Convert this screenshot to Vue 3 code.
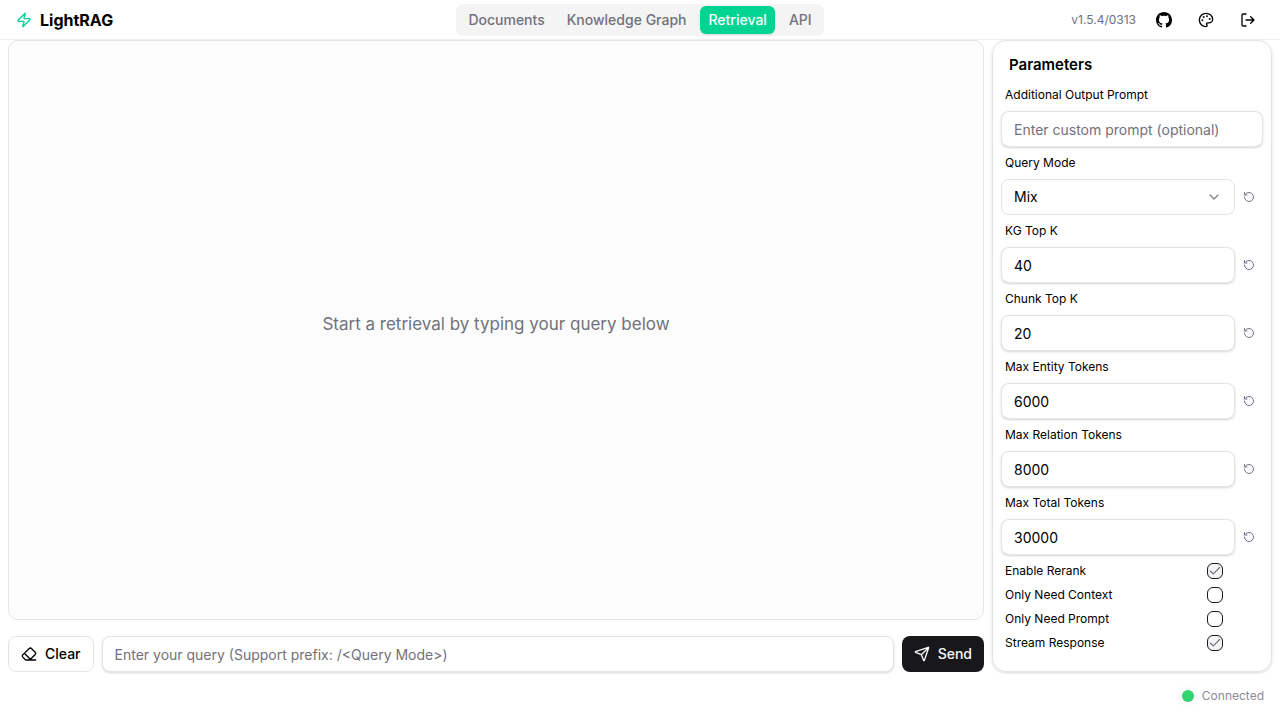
<script setup>
import { ref, reactive } from 'vue'

const tabs = ['Documents', 'Knowledge Graph', 'Retrieval', 'API']
const activeTab = ref('Retrieval')
const query = ref('')
const prompt = ref('')
const mode = ref('Mix')
const modes = ['Naive', 'Local', 'Global', 'Hybrid', 'Mix', 'Bypass']

const numbers = reactive([
  { id: 'kg-top-k', label: 'KG Top K', value: 40, initial: 40 },
  { id: 'chunk-top-k', label: 'Chunk Top K', value: 20, initial: 20 },
  { id: 'max-entity', label: 'Max Entity Tokens', value: 6000, initial: 6000 },
  { id: 'max-relation', label: 'Max Relation Tokens', value: 8000, initial: 8000 },
  { id: 'max-total', label: 'Max Total Tokens', value: 30000, initial: 30000 },
])

const toggles = reactive([
  { id: 'rerank', label: 'Enable Rerank', on: true },
  { id: 'only-context', label: 'Only Need Context', on: false },
  { id: 'only-prompt', label: 'Only Need Prompt', on: false },
  { id: 'stream', label: 'Stream Response', on: true },
])
</script>

<template>
  <div class="app">
    <header class="header">
      <a class="brand" href="#">
        <svg class="icon zap" viewBox="0 0 24 24" aria-hidden="true"><path d="M4 14a1 1 0 0 1-.78-1.63l9.9-10.2a.5.5 0 0 1 .86.46l-1.92 6.02A1 1 0 0 0 13 10h7a1 1 0 0 1 .78 1.63l-9.9 10.2a.5.5 0 0 1-.86-.46l1.92-6.02A1 1 0 0 0 11 14z" /></svg>
        <span>LightRAG</span>
      </a>
      <nav class="tabs">
        <button v-for="tab in tabs" :key="tab" type="button" class="tab" :class="{ active: tab === activeTab }" @click="activeTab = tab">{{ tab }}</button>
      </nav>
      <div class="actions">
        <span class="version">v1.5.4/0313</span>
        <a class="action" href="#" aria-label="GitHub">
          <svg class="github" viewBox="0 0 16 16" aria-hidden="true"><path d="M8 0C3.58 0 0 3.58 0 8c0 3.54 2.29 6.53 5.47 7.59.4.07.55-.17.55-.38 0-.19-.01-.82-.01-1.49-2.01.37-2.53-.49-2.69-.94-.09-.23-.48-.94-.82-1.13-.28-.15-.68-.52-.01-.53.63-.01 1.08.58 1.23.82.72 1.21 1.87.87 2.33.66.07-.52.28-.87.51-1.07-1.78-.2-3.64-.89-3.64-3.95 0-.87.31-1.59.82-2.15-.08-.2-.36-1.02.08-2.12 0 0 .67-.21 2.2.82.64-.18 1.32-.27 2-.27s1.36.09 2 .27c1.53-1.04 2.2-.82 2.2-.82.44 1.1.16 1.92.08 2.12.51.56.82 1.27.82 2.15 0 3.07-1.87 3.75-3.65 3.95.29.25.54.73.54 1.48 0 1.07-.01 1.93-.01 2.2 0 .21.15.46.55.38A8.01 8.01 0 0 0 16 8c0-4.42-3.58-8-8-8z" /></svg>
        </a>
        <button class="action" type="button" aria-label="Theme">
          <svg class="icon" viewBox="0 0 24 24" aria-hidden="true">
            <circle class="dot" cx="13.5" cy="6.5" r=".5" /><circle class="dot" cx="17.5" cy="10.5" r=".5" /><circle class="dot" cx="8.5" cy="7.5" r=".5" /><circle class="dot" cx="6.5" cy="12.5" r=".5" />
            <path d="M12 2C6.5 2 2 6.5 2 12s4.5 10 10 10c.926 0 1.648-.746 1.648-1.688 0-.437-.18-.835-.437-1.125-.29-.289-.438-.652-.438-1.125a1.64 1.64 0 0 1 1.668-1.668h1.996c3.051 0 5.555-2.503 5.555-5.554C21.965 6.012 17.461 2 12 2z" />
          </svg>
        </button>
        <button class="action" type="button" aria-label="Log out">
          <svg class="icon" viewBox="0 0 24 24" aria-hidden="true"><path d="M9 21H5a2 2 0 0 1-2-2V5a2 2 0 0 1 2-2h4M16 17l5-5-5-5M21 12H9" /></svg>
        </button>
      </div>
    </header>

    <main class="main">
      <section class="chat">
        <div class="messages">Start a retrieval by typing your query below</div>
        <form class="composer" @submit.prevent>
          <button class="btn outline" type="button" @click="query = ''">
            <svg class="icon" viewBox="0 0 24 24" aria-hidden="true"><path d="m7 21-4.3-4.3c-1-1-1-2.500 0-3.400l9.600-9.600c1-1 2.500-1 3.400 0l5.600 5.600c1 1 1 2.500 0 3.400L13 21M22 21H7M5 11l9 9" /></svg>
            Clear
          </button>
          <input v-model="query" class="field query" type="text" aria-label="Query" placeholder="Enter your query (Support prefix: /&lt;Query Mode&gt;)" />
          <button class="btn solid" type="submit">
            <svg class="icon" viewBox="0 0 24 24" aria-hidden="true"><path d="M14.536 21.686a.5.5 0 0 0 .937-.024l6.5-19a.496.496 0 0 0-.635-.635l-19 6.5a.5.5 0 0 0-.024.937l7.930 3.180a2 2 0 0 1 1.112 1.110zM21.854 2.147l-10.940 10.939" /></svg>
            Send
          </button>
        </form>
      </section>

      <aside class="params">
        <h2 class="title">Parameters</h2>
        <label class="label" for="prompt">Additional Output Prompt</label>
        <input id="prompt" v-model="prompt" class="field" type="text" placeholder="Enter custom prompt (optional)" />

        <label class="label" for="mode">Query Mode</label>
        <div class="row">
          <div class="select-wrap">
            <select id="mode" v-model="mode" class="field select">
              <option v-for="m in modes" :key="m">{{ m }}</option>
            </select>
            <svg class="icon chevron" viewBox="0 0 24 24" aria-hidden="true"><path d="m6 9 6 6 6-6" /></svg>
          </div>
          <button class="reset" type="button" aria-label="Reset Query Mode" @click="mode = 'Mix'">
            <svg class="icon" viewBox="0 0 24 24" aria-hidden="true"><path d="M3 12a9 9 0 1 0 9-9 9.750 9.750 0 0 0-6.740 2.740L3 8M3 3v5h5" /></svg>
          </button>
        </div>

        <template v-for="n in numbers" :key="n.id">
          <label class="label" :for="n.id">{{ n.label }}</label>
          <div class="row">
            <input :id="n.id" v-model="n.value" class="field" type="number" />
            <button class="reset" type="button" :aria-label="'Reset ' + n.label" @click="n.value = n.initial">
              <svg class="icon" viewBox="0 0 24 24" aria-hidden="true"><path d="M3 12a9 9 0 1 0 9-9 9.750 9.750 0 0 0-6.740 2.740L3 8M3 3v5h5" /></svg>
            </button>
          </div>
        </template>

        <div v-for="t in toggles" :key="t.id" class="toggle">
          <label class="label" :for="t.id">{{ t.label }}</label>
          <span class="check">
            <input :id="t.id" v-model="t.on" type="checkbox" />
            <svg v-if="t.on" class="icon tick" viewBox="0 0 24 24" aria-hidden="true"><path d="M20 6 9 17l-5-5" /></svg>
          </span>
        </div>
      </aside>
    </main>

    <footer class="status"><span class="lamp"></span>Connected</footer>
  </div>
</template>

<style>
body { background: #fff; }
</style>

<style scoped>
.app, .app * { box-sizing: border-box; }
.app {
  display: flex;
  flex-direction: column;
  min-height: 100vh;
  font-family: Inter, "Liberation Sans", sans-serif;
  font-size: 14px;
  line-height: 20px;
  color: #000;
}
button, input, select { font: inherit; color: inherit; }
button { cursor: pointer; }
.icon {
  width: 16px;
  height: 16px;
  flex: none;
  fill: none;
  stroke: currentColor;
  stroke-width: 2;
  stroke-linecap: round;
  stroke-linejoin: round;
}
.header {
  display: grid;
  grid-template-columns: 1fr auto 1fr;
  align-items: center;
  height: 40px;
  padding: 0 16px;
  border-bottom: 1px solid #f0f0f1;
}
.brand {
  display: flex;
  align-items: center;
  gap: 8px;
  font-size: 16px;
  line-height: 24px;
  font-weight: 700;
  color: inherit;
  text-decoration: none;
}
.zap { color: #00d492; }
.tabs {
  display: flex;
  gap: 6px;
  padding: 2px 4px;
  border-radius: 8px;
  background: #f4f4f5;
}
.tab {
  padding: 4px 8px;
  border: 0;
  border-radius: 6px;
  background: none;
  font-weight: 500;
  color: #71717b;
}
.tab.active {
  background: #00d492;
  color: #fff;
  box-shadow: 0 1px 2px rgba(0, 0, 0, 0.1);
}
.actions {
  display: flex;
  align-items: center;
  justify-content: flex-end;
  gap: 10px;
}
.version {
  padding-right: 2px;
  font-size: 12px;
  line-height: 16px;
  color: #6a7282;
}
.action {
  display: flex;
  align-items: center;
  justify-content: center;
  width: 32px;
  height: 32px;
  padding: 0;
  border: 0;
  background: none;
  color: inherit;
}
.github { width: 16px; height: 16px; fill: currentColor; }
.dot { fill: currentColor; }
.main {
  display: flex;
  flex: 1;
  gap: 8px;
  padding: 0 8px;
}
.chat {
  display: flex;
  flex: 1;
  flex-direction: column;
  gap: 16px;
  min-width: 0;
}
.messages {
  display: flex;
  flex: 1;
  align-items: center;
  justify-content: center;
  padding-bottom: 12px;
  border: 1px solid #e4e4e7;
  border-radius: 10px;
  background: #fcfcfc;
  font-size: 17px;
  line-height: 28px;
  color: #71717b;
}
.composer { display: flex; gap: 8px; }
.btn {
  display: flex;
  align-items: center;
  gap: 8px;
  height: 36px;
  padding: 0 12px;
  border: 1px solid #e4e4e7;
  border-radius: 8px;
  background: #fff;
  font-weight: 500;
}
.btn.solid {
  border: 0;
  background: #18181b;
  color: #fafafa;
}
.field {
  flex: 1;
  width: 100%;
  min-width: 0;
  height: 36px;
  padding: 0 12px;
  border: 1px solid #e4e4e7;
  border-radius: 8px;
  background: #fff;
  box-shadow: 0 1px 3px rgba(0, 0, 0, 0.1), 0 1px 2px rgba(0, 0, 0, 0.06);
  appearance: none;
  outline: none;
}
.field::placeholder { color: #71717b; opacity: 1; }
.field[type="number"] { appearance: textfield; }
.params {
  display: flex;
  flex-direction: column;
  gap: 8px;
  width: 280px;
  padding: 12px 8px 20px;
  border: 1px solid #e4e4e7;
  border-radius: 14px;
  box-shadow: 0 1px 3px rgba(0, 0, 0, 0.1), 0 1px 2px rgba(0, 0, 0, 0.06);
}
.params > .field { flex: none; }
.title {
  margin: 0;
  padding: 0 8px 2px;
  font-size: 15px;
  line-height: 24px;
  font-weight: 600;
}
.label {
  padding-left: 4px;
  font-size: 12px;
  line-height: 16px;
}
.row { display: flex; align-items: center; gap: 4px; }
.select-wrap { position: relative; flex: 1; display: flex; }
.select { box-shadow: none; }
.chevron {
  position: absolute;
  right: 13px;
  top: 10px;
  color: #848488;
  pointer-events: none;
}
.reset {
  display: flex;
  align-items: center;
  justify-content: center;
  width: 20px;
  height: 20px;
  margin-right: 4px;
  padding: 0;
  border: 0;
  background: none;
  color: #6a7282;
}
.reset .icon { width: 12px; height: 12px; }
.toggle {
  display: flex;
  align-items: center;
  justify-content: space-between;
  padding-right: 40px;
}
.check { position: relative; display: flex; }
.check input {
  width: 16px;
  height: 16px;
  margin: 0;
  border: 1px solid #18181b;
  border-radius: 6px;
  background: #fff;
  appearance: none;
}
.check input:checked { background: #f4f4f5; }
.tick {
  position: absolute;
  inset: 1px;
  width: 14px;
  height: 14px;
  color: #71717b;
  pointer-events: none;
}
.status {
  display: flex;
  align-items: center;
  justify-content: flex-end;
  gap: 8px;
  height: 48px;
  padding: 0 16px;
  font-size: 12px;
  line-height: 16px;
  color: #8b8b93;
}
.lamp {
  width: 12px;
  height: 12px;
  border-radius: 50%;
  background: #31d471;
  box-shadow: 0 0 8px rgba(0, 0, 0, 0.1);
}
</style>
